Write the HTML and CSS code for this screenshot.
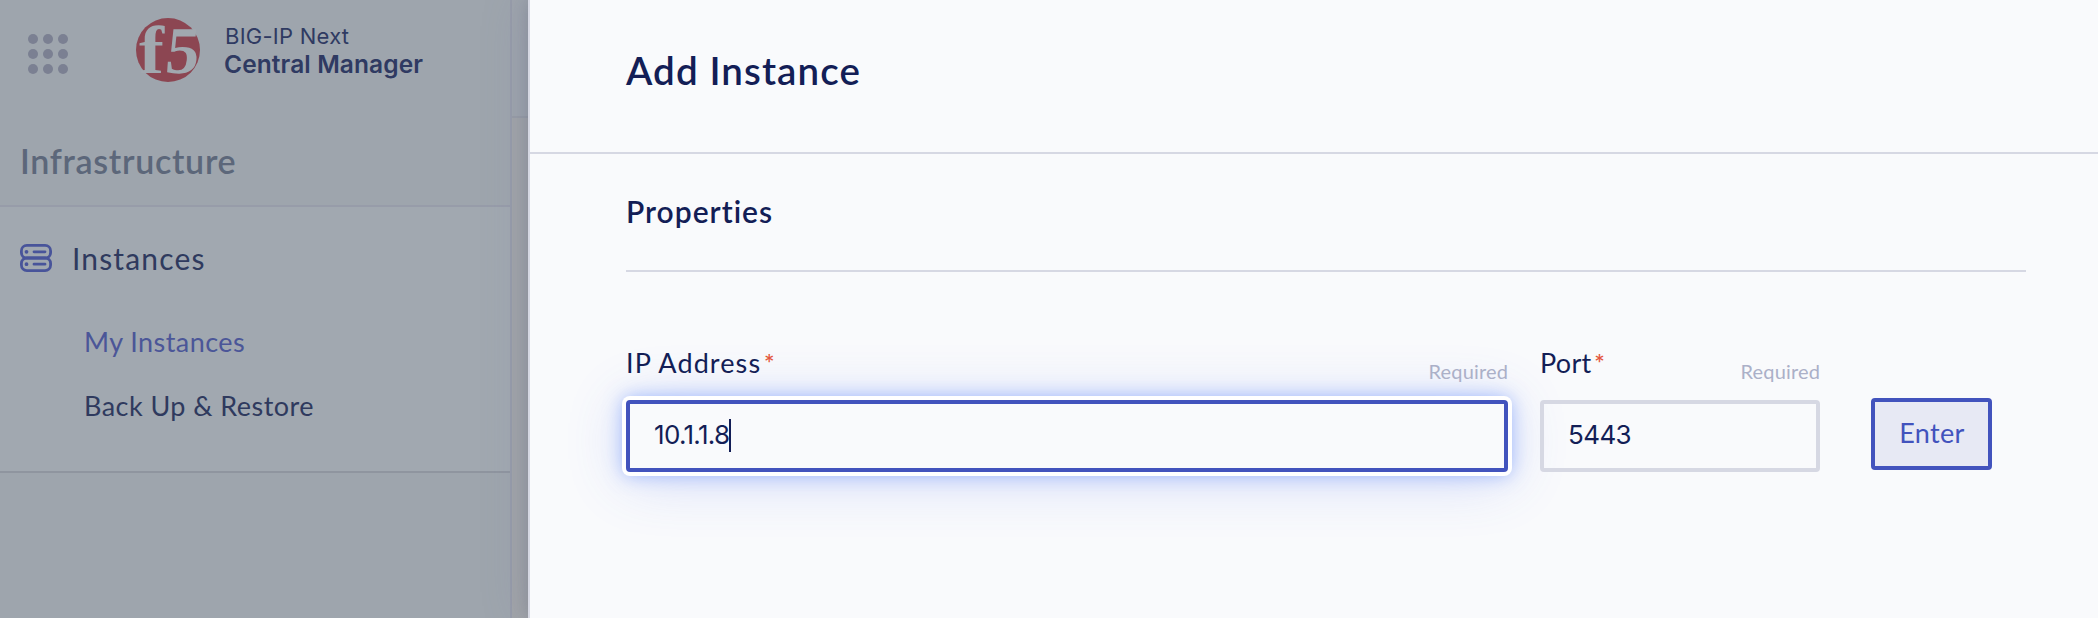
FILE: index.html
```html
<!DOCTYPE html>
<html lang="en">
<head>
<meta charset="utf-8">
<title>BIG-IP Next Central Manager</title>
<link rel="stylesheet" href="styles.css">
</head>
<body>
<div class="app">
  <aside class="sidebar">
    <header class="brand">
      <svg class="brand-grid" width="40" height="40" viewBox="0 0 40 40">
        <circle cx="5" cy="5" r="5"/><circle cx="20" cy="5" r="5"/><circle cx="35" cy="5" r="5"/>
        <circle cx="5" cy="20" r="5"/><circle cx="20" cy="20" r="5"/><circle cx="35" cy="20" r="5"/>
        <circle cx="5" cy="35" r="5"/><circle cx="20" cy="35" r="5"/><circle cx="35" cy="35" r="5"/>
      </svg>
      <svg class="brand-logo" width="64" height="64" viewBox="0 0 64 64">
        <circle class="logo-disc" cx="32" cy="32" r="32"/>
        <text class="logo-text" transform="translate(3 55) scale(1.12 1)">f</text>
        <text class="logo-text" transform="translate(28 55) skewX(-6)">5</text>
      </svg>
      <div class="brand-name">
        <div class="brand-product">BIG-IP Next</div>
        <div class="brand-title">Central Manager</div>
      </div>
    </header>
    <h2 class="section-title">Infrastructure</h2>
    <nav class="nav">
      <div class="nav-group">
        <svg class="nav-icon" width="32" height="28" viewBox="0 0 32 28">
          <rect x="1.4" y="1.4" width="29.2" height="12.6" rx="5.5"/>
          <rect x="1.4" y="14" width="29.2" height="12.6" rx="5.5"/>
          <path d="M14 7.8h11M14 20.2h11"/>
          <path d="M6.5 7.8h.01M6.5 20.2h.01" class="nav-icon-dot"/>
        </svg>
        <span>Instances</span>
      </div>
      <a class="nav-link nav-link-active">My Instances</a>
      <a class="nav-link">Back Up &amp; Restore</a>
    </nav>
  </aside>
  <div class="main"><div class="main-header"></div></div>
  <section class="panel">
    <header class="panel-header"><h1>Add Instance</h1></header>
    <div class="panel-body">
      <h3>Properties</h3>
      <form class="fields">
        <div class="field field-ip">
          <div class="field-head"><label>IP Address<span class="star">*</span></label><span class="required">Required</span></div>
          <div class="input input-focus"><span>10.1.1.8</span><i class="caret"></i></div>
        </div>
        <div class="field field-port">
          <div class="field-head"><label class="port-label">Port<span class="star">*</span></label><span class="required">Required</span></div>
          <div class="input">5443</div>
        </div>
        <button class="enter" type="button">Enter</button>
      </form>
    </div>
  </section>
</div>
</body>
</html>
```
FILE: styles.css
```css
* { box-sizing: border-box; }
body { margin: 0; font-family: Lato, sans-serif; font-variant-ligatures: none; color: #131e56; }
h1, h2, h3 { margin: 0; font-weight: 600; }
.app { display: flex; width: 2098px; height: 618px; overflow: hidden; background: #9ea5ad; }

.sidebar { width: 512px; flex: none; border-right: 2px solid #979ca9; }
.brand { display: flex; align-items: flex-start; height: 141px; padding: 18px 0 0 28px; }
.brand-grid { margin-top: 16px; fill: #7b8092; }
.brand-logo { margin-left: 68px; overflow: visible; }
.logo-disc { fill: #8c4652; }
.logo-text { fill: #a1a8af; font: bold 67px "Liberation Serif", serif; }
.brand-name { margin: 4px 0 0 24px; font-family: Inter, sans-serif; color: #2f3a62; }
.brand-product { padding-left: 1px; font-size: 22px; line-height: 28px; letter-spacing: .25px; }
.brand-title { font-size: 24.5px; line-height: 28px; font-weight: 600; letter-spacing: .1px; }
.section-title { height: 66px; padding-left: 20px; border-bottom: 2px solid #979ca9; font-size: 34px; line-height: 40px; letter-spacing: .7px; color: #5c677a; }
.nav { height: 266px; padding-top: 31px; border-bottom: 2px solid #8f959f; background: #a1a8b0; color: #2f3a5e; }
.nav-group { display: flex; align-items: center; gap: 20px; height: 40px; margin-bottom: 32px; padding-left: 20px; font-size: 30px; letter-spacing: 1.15px; }
.nav-icon { fill: none; stroke: #48549a; stroke-width: 2.8; stroke-linecap: round; }
.nav-icon-dot { stroke-width: 3.8; }
.nav-link { display: block; padding-left: 84px; font-size: 27px; line-height: 64px; letter-spacing: .45px; }
.nav-link-active { color: #4b5698; }

.main { width: 16px; flex: none; background: #a2a5a9; }
.main-header { height: 118px; border-bottom: 2px solid #989da6; background: #9fa5ad; }

.panel { flex: 1; position: relative; border-left: 2px solid #d6d8e3; background: #f9fafc; box-shadow: 0 0 44px rgba(110, 120, 165, .22), 0 0 16px rgba(60, 65, 80, .22); }
.panel-header { height: 154px; padding: 46px 0 0 96px; border-bottom: 2px solid #d6d8e3; }
.panel-header h1 { font-size: 38.5px; line-height: 48px; letter-spacing: 1.1px; }
.panel-body { padding: 37px 72px 0 96px; }
.panel-body h3 { height: 81px; border-bottom: 2px solid #d6d8e3; font-size: 30px; line-height: 40px; letter-spacing: 1px; }
.fields { display: flex; align-items: flex-start; padding-top: 73px; }
.field-ip { width: 882px; }
.field-port { width: 280px; margin-left: 32px; }
.field-head { display: flex; justify-content: space-between; height: 55px; position: relative; z-index: 1; }
.field-head label { font-size: 27px; line-height: 36px; letter-spacing: 1.1px; }
.field-head .port-label { letter-spacing: .3px; }
.star { margin-left: 3px; font: 20px/0 Inter, sans-serif; vertical-align: 4px; color: #e4573d; }
.required { padding-top: 14px; font-size: 20px; line-height: 24px; letter-spacing: .15px; color: #abb0c8; }
.input { display: flex; align-items: center; height: 72px; padding: 0 0 3px 24px; border: 4px solid #d6d8e3; border-radius: 4px; font-family: Inter, sans-serif; font-size: 26px; letter-spacing: -.6px; }
.input-focus { border-color: #4253bd; background: #f9fafc; letter-spacing: -.7px; box-shadow: 0 0 0 4px #fff, 0 0 18px 3px rgba(80, 130, 255, .5), 0 5px 60px rgba(70, 100, 240, .24); }
.caret { width: 2px; height: 33px; margin-top: 1px; background: #131e56; }
.enter { width: 121px; height: 72px; margin: 53px 0 0 51px; padding: 0 0 4px 1px; border: 4px solid #4253bd; border-radius: 4px; background: #e7e9f4; font: 27px Lato, sans-serif; letter-spacing: .3px; color: #4253bd; }
```
